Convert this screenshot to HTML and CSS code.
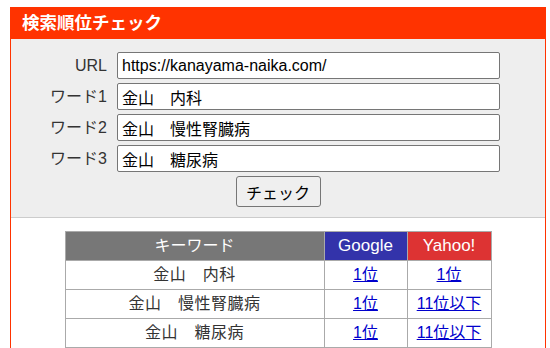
FILE: index.html
```html
<!DOCTYPE html>
<html lang="ja">
<head>
<meta charset="utf-8">
<title>検索順位チェック</title>
<link rel="stylesheet" href="styles.css">
</head>
<body>
<div class="box">
  <h1 class="title">検索順位チェック</h1>
  <form class="form">
    <div class="fields">
      <label class="label">URL</label>
      <input class="field" type="text" value="https://kanayama-naika.com/">
      <label class="label">ワード1</label>
      <input class="field" type="text" value="金山　内科">
      <label class="label">ワード2</label>
      <input class="field" type="text" value="金山　慢性腎臓病">
      <label class="label">ワード3</label>
      <input class="field" type="text" value="金山　糖尿病">
    </div>
    <div class="actions"><button class="btn" type="button">チェック</button></div>
  </form>
  <div class="results">
    <table class="rank">
      <thead>
        <tr><th class="h-kw">キーワード</th><th class="h-g">Google</th><th class="h-y">Yahoo!</th></tr>
      </thead>
      <tbody>
        <tr><td class="kw">金山　内科</td><td><a href="#">1位</a></td><td><a href="#">1位</a></td></tr>
        <tr><td class="kw">金山　慢性腎臓病</td><td><a href="#">1位</a></td><td><a href="#">11位以下</a></td></tr>
        <tr><td class="kw">金山　糖尿病</td><td><a href="#">1位</a></td><td><a href="#">11位以下</a></td></tr>
      </tbody>
    </table>
  </div>
</div>
</body>
</html>
```
FILE: styles.css
```css
html, body {
  margin: 0;
  background: #fff;
}
body {
  padding: 7px 0 0 10px;
  font-family: "Liberation Sans", "Noto Sans CJK JP", sans-serif;
  font-size: 16px;
  color: #333;
}
.box {
  width: 536px;
  box-sizing: border-box;
  border-left: 1px solid #ff3300;
  border-right: 1px solid #ff3300;
  min-height: 400px;
}
.title {
  margin: 0;
  height: 32px;
  background: #ff3300;
  color: #fff;
  font-size: 17.5px;
  font-weight: bold;
  line-height: 32px;
  padding-left: 11px;
}
.form {
  margin: 0;
  background: #eeeeee;
  padding: 13px 0 10px;
  border-bottom: 1px solid #cccccc;
}
.fields {
  display: grid;
  grid-template-columns: 99px 383px;
  column-gap: 7px;
  row-gap: 4px;
}
.label {
  text-align: right;
  padding-right: 3px;
  line-height: 27px;
  font-size: 16px;
  color: #333;
}
.field {
  height: 27px;
  box-sizing: border-box;
  margin: 0;
  border: 1px solid #767676;
  border-radius: 2px;
  padding: 0 4px;
  font: 16px "Liberation Sans", "Noto Sans CJK JP", sans-serif;
  color: #000;
  background: #fff;
}
.actions {
  display: flex;
  justify-content: center;
  margin-top: 4px;
}
.btn {
  height: 31px;
  width: 85px;
  margin: 0;
  padding: 0;
  border: 1px solid #767676;
  border-radius: 3px;
  background: #efefef;
  font: 16px "Liberation Sans", "Noto Sans CJK JP", sans-serif;
  color: #000;
}
.results {
  padding-top: 13px;
  display: flex;
  justify-content: center;
}
.rank {
  border-collapse: collapse;
  width: 427px;
  table-layout: fixed;
}
.rank th, .rank td {
  border: 1px solid #aaaaaa;
  text-align: center;
  padding: 0;
  height: 28px;
  font-size: 16px;
  font-weight: normal;
  line-height: 20px;
}
.rank th {
  color: #fff;
}
.h-kw { width: 258px; background: #777777; }
.h-g { width: 82px; background: #3333aa; }
.h-y { background: #dd3333; }
.rank .h-g, .rank .h-y { font-size: 17px; }
.rank td { color: #333; }
.kw { letter-spacing: 0.5px; }
.rank a { color: #0000cc; }
```
